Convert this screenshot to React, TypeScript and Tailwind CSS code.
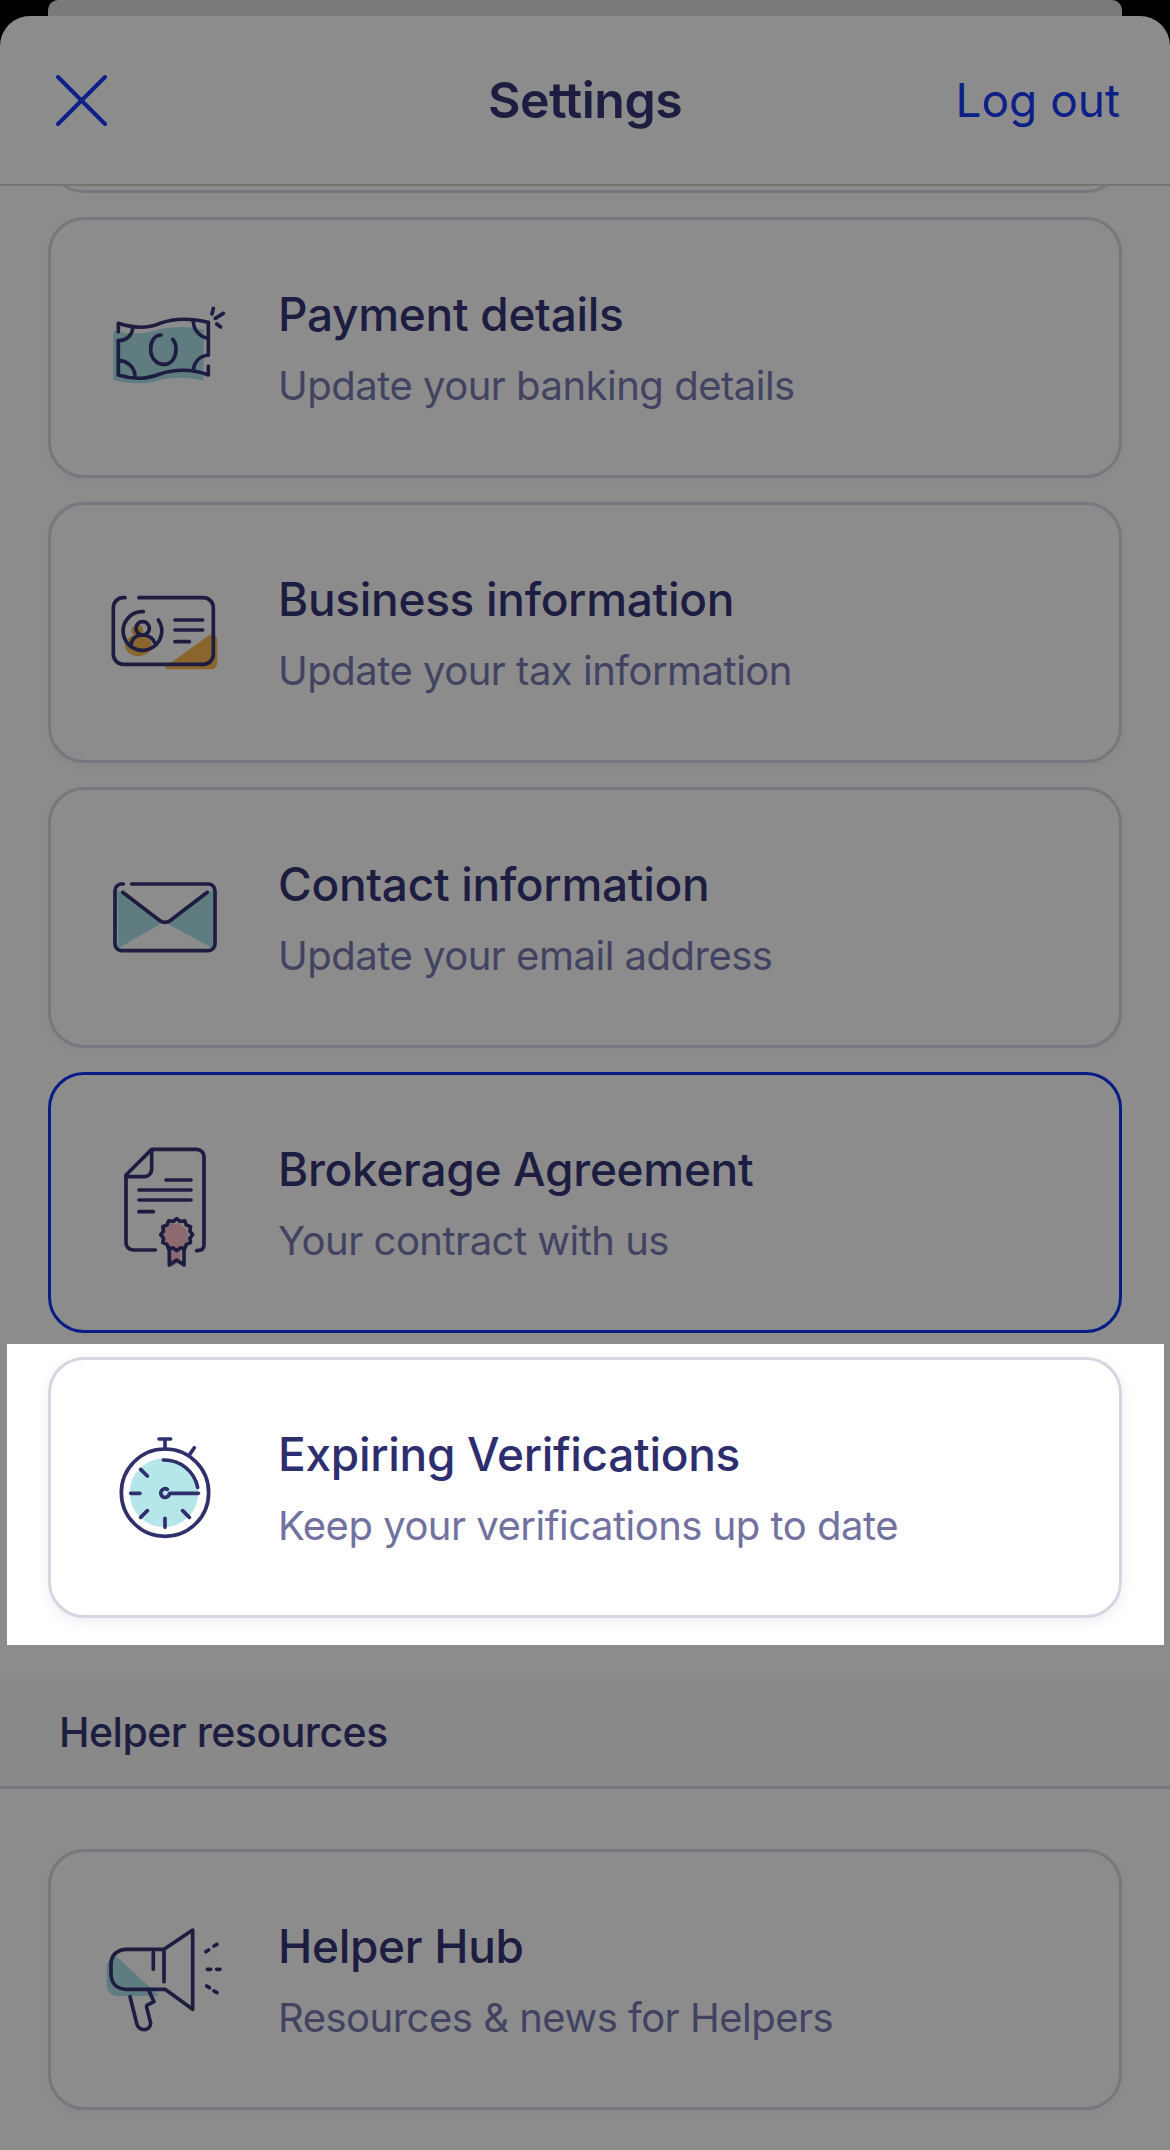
import React from 'react';

const NAVY = '#1c1d40';
const TEAL = '#5f7d80';

function seal(cx: number, cy: number, r: number, bumps: number) {
  const pts: string[] = [];
  for (let i = 0; i < bumps * 2; i++) {
    const a = (Math.PI * i) / bumps - Math.PI / 2;
    const rr = i % 2 === 0 ? r + 4 : r - 3;
    pts.push(`${(cx + rr * Math.cos(a)).toFixed(1)} ${(cy + rr * Math.sin(a)).toFixed(1)}`);
  }
  return `M${pts.join('L')}Z`;
}

function MoneyIcon() {
  return (
    <g transform="translate(0 159)">
      <path fill={TEAL} d="M160 183C210 195 270 190 300 178C340 168 395 168 432 180L430 332C390 320 330 320 290 333C250 345 200 340 160 330Z" />
      <g fill="none" stroke={NAVY} strokeWidth="11" strokeLinecap="round" strokeLinejoin="round">
        <path d="M175 185V160C220 175 265 175 300 160C345 143 395 145 445 157V255" />
        <path d="M445 288V315C395 295 340 298 300 312C260 328 215 328 175 315V212" />
        <path d="M175 212C200 212 218 195 218 172" />
        <path d="M400 152C400 180 420 202 445 205" />
        <path d="M175 272C205 272 225 295 225 320" />
        <path d="M445 255C420 258 403 275 400 300" />
        <path d="M303 195C285 195 272 212 272 238C272 265 290 283 312 283C335 283 348 262 348 238C348 225 345 215 338 208" />
        <path d="M460 115L456 132M490 130L466 145M470 162L482 171" />
      </g>
    </g>
  );
}

function IdCardIcon() {
  return (
    <g transform="translate(0 174)">
      <g fill="#8a652e">
        <circle cx="232" cy="212" r="18" />
        <ellipse cx="235" cy="256" rx="40" ry="32" />
        <path d="M316 320L448 225Q472 220 472 245V305Q472 328 450 328H330Q316 328 316 320Z" />
      </g>
      <g fill="none" stroke={NAVY} strokeWidth="11" strokeLinecap="round" strokeLinejoin="round">
        <path d="M195 113H190A30 30 0 0 0 160 143V283A30 30 0 0 0 190 313H430A30 30 0 0 0 460 283V143A30 30 0 0 0 430 113H237" />
        <path d="M345 180H428M345 210H428M345 245H388" />
        <path d="M250 155A58 58 0 1 0 295 180" />
        <circle cx="248" cy="205" r="20" />
        <path d="M212 258C215 235 230 225 248 225C268 225 282 238 285 250" />
      </g>
    </g>
  );
}

function MailIcon() {
  return (
    <g transform="translate(0 189)">
      <g fill={TEAL}>
        <path d="M172 120L305 220L175 295Z" />
        <path d="M460 118L320 220L458 295Z" />
      </g>
      <g fill="none" stroke={NAVY} strokeWidth="11" strokeLinecap="round" strokeLinejoin="round">
        <path d="M190 102H185A20 20 0 0 0 165 122V282A20 20 0 0 0 185 302H445A20 20 0 0 0 465 282V122A20 20 0 0 0 445 102H215" />
        <path d="M188 127L300 212Q315 222 330 212L442 127" />
      </g>
    </g>
  );
}

function ContractIcon() {
  return (
    <g transform="translate(90 174)">
      <g fill="#8d6a6f">
        <circle cx="255" cy="320" r="40" />
        <path d="M232 350H272V395L252 408L234 412Z" />
      </g>
      <g fill="none" stroke={NAVY} strokeWidth="11" strokeLinecap="round" strokeLinejoin="round">
        <path d="M196 360H130A22 22 0 0 1 108 338V135L185 58H320A22 22 0 0 1 342 80V345Q342 362 320 362" />
        <path d="M185 60V118A22 22 0 0 1 163 140H108" />
        <path d="M228 150H303M147 180H303M147 210H303M147 245H190" />
        <path d={seal(260, 314, 44, 12)} />
        <path d="M238 354V405L260 390L282 405V354" />
      </g>
    </g>
  );
}

function StopwatchIcon() {
  return (
    <g transform="translate(90 189)">
      <circle cx="222" cy="218" r="103" fill="#b4e6ea" />
      <g fill="none" stroke="#2f2f6c" strokeWidth="11" strokeLinecap="round" strokeLinejoin="round">
        <circle cx="225" cy="218" r="131" />
        <path d="M225 60V85M207 57H242M298 105L313 83" />
        <path d="M220 120A102 102 0 0 1 323 202" />
        <path d="M240 220H325" />
        <path d="M232 208A13 13 0 1 0 238 222" />
        <path d="M152 148L172 168M122 220H150M152 292L172 272M225 295V322M278 272L298 292" />
      </g>
    </g>
  );
}

function MegaphoneIcon() {
  return (
    <g transform="translate(90 213)">
      <path fill={TEAL} d="M80 110L208 228H85C60 228 50 210 50 190V140C50 125 65 115 80 110Z" />
      <g fill="none" stroke={NAVY} strokeWidth="11" strokeLinecap="round" strokeLinejoin="round">
        <path d="M222 88H110C80 88 63 108 63 132V160C63 190 80 208 110 208H225L308 268V30L222 88V185" />
        <path d="M190 97V148" />
        <path d="M120 230L140 310C145 335 180 335 182 310L170 262Q168 255 178 252L192 245L175 208" />
        <path d="M348 95L356 90M372 78L381 73M352 148H362M380 148H390M350 198L358 203M372 213L381 218" />
      </g>
    </g>
  );
}

function SettingsCard({ icon, title, sub, variant = 'dim' }: { icon: React.ReactNode; title: string; sub: string; variant?: 'dim' | 'active' | 'lit' }) {
  const border = variant === 'active' ? 'border-[#071c85]' : variant === 'lit' ? 'border-[#d6d6e2] shadow-[0_4px_14px_rgba(40,40,100,0.08)]' : 'border-[#77777f] shadow-[0_3px_10px_rgba(0,0,0,0.03)]';
  return (
    <div className={`flex h-[261px] items-center rounded-[36px] border-[3px] pl-[9px] ${border}`}>
      <svg className="h-[255px] w-[200px] shrink-0" viewBox="0 9 600 765">{icon}</svg>
      <div className="ml-[18px] flex flex-col gap-[19px] pt-[2px]">
        <div className={`text-[46px] leading-[56px] font-[550] tracking-[-0.3px] ${variant === 'lit' ? 'text-[#2e2e6e]' : 'text-[#1c1d40]'}`}>{title}</div>
        <div className={`text-[40px] leading-[50px] tracking-[-0.5px] ${variant === 'lit' ? 'text-[#7272a0]' : 'text-[#414360]'}`}>{sub}</div>
      </div>
    </div>
  );
}

export default function App() {
  return (
    <div className="flex h-[2150px] w-[1170px] flex-col overflow-hidden bg-black font-['Inter',sans-serif]">
      <div className="mx-[48px] h-[16px] shrink-0 rounded-t-[10px] bg-[#7a7a7a]" />
      <div className="flex-1 rounded-t-[30px] bg-[#8c8c8c]">
        <header className="grid h-[170px] grid-cols-3 items-center border-b-[2px] border-[#747474] px-[48px]">
          <svg className="ml-[8px] h-[51px] w-[51px]" viewBox="0 0 51 51" fill="none" stroke="#0c2088" strokeWidth="4" strokeLinecap="round">
            <path d="M2 2L49 49M49 2L2 49" />
          </svg>
          <div className="text-center text-[50px] font-semibold tracking-[-0.5px] text-[#1c1d40]">Settings</div>
          <div className="mr-[2px] text-right text-[46px] text-[#0c2088]">Log out</div>
        </header>

        <div className="flex flex-col gap-[24px] px-[48px]">
          <div className="flex h-[7px] flex-col justify-end overflow-hidden">
            <div className="h-[261px] shrink-0 rounded-[36px] border-[3px] border-[#77777f]" />
          </div>
          <SettingsCard icon={<MoneyIcon />} title="Payment details" sub="Update your banking details" />
          <SettingsCard icon={<IdCardIcon />} title="Business information" sub="Update your tax information" />
          <SettingsCard icon={<MailIcon />} title="Contact information" sub="Update your email address" />
          <SettingsCard icon={<ContractIcon />} title="Brokerage Agreement" sub="Your contract with us" variant="active" />
          <div className="mt-[-13px] mr-[-42px] mb-[-27px] ml-[-41px] bg-white pt-[13px] pr-[42px] pb-[27px] pl-[41px]">
            <SettingsCard icon={<StopwatchIcon />} title="Expiring Verifications" sub="Keep your verifications up to date" variant="lit" />
          </div>
        </div>

        <div className="mt-[60px] flex h-[111px] items-center border-b-[3px] border-[#77777f] bg-[#898989] pt-[2px] pl-[59px]">
          <span className="text-[41px] font-medium tracking-[-0.5px] text-[#1c1d40]">Helper resources</span>
        </div>

        <div className="mt-[60px] px-[48px]">
          <SettingsCard icon={<MegaphoneIcon />} title="Helper Hub" sub="Resources & news for Helpers" />
        </div>
      </div>
    </div>
  );
}
